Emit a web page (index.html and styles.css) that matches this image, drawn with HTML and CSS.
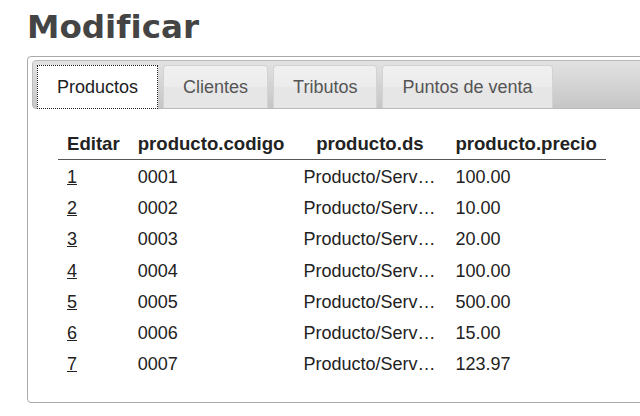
FILE: index.html
```html
<!DOCTYPE html>
<html lang="es">
<head>
<meta charset="utf-8">
<title>Modificar</title>
<link rel="stylesheet" href="styles.css">
</head>
<body>
<div class="page">
  <h1 class="title">Modificar</h1>
  <div class="widget">
    <ul class="nav">
      <li class="tab active"><a href="#productos">Productos</a></li>
      <li class="tab"><a href="#clientes">Clientes</a></li>
      <li class="tab"><a href="#tributos">Tributos</a></li>
      <li class="tab"><a href="#puntos">Puntos de venta</a></li>
    </ul>
    <div class="panel" id="productos">
      <table class="grid">
        <thead>
          <tr><th>Editar</th><th>producto.codigo</th><th>producto.ds</th><th>producto.precio</th></tr>
        </thead>
        <tbody>
          <tr><td><a href="#">1</a></td><td>0001</td><td class="ds">Producto/Serv…</td><td>100.00</td></tr>
          <tr><td><a href="#">2</a></td><td>0002</td><td class="ds">Producto/Serv…</td><td>10.00</td></tr>
          <tr><td><a href="#">3</a></td><td>0003</td><td class="ds">Producto/Serv…</td><td>20.00</td></tr>
          <tr><td><a href="#">4</a></td><td>0004</td><td class="ds">Producto/Serv…</td><td>100.00</td></tr>
          <tr><td><a href="#">5</a></td><td>0005</td><td class="ds">Producto/Serv…</td><td>500.00</td></tr>
          <tr><td><a href="#">6</a></td><td>0006</td><td class="ds">Producto/Serv…</td><td>15.00</td></tr>
          <tr><td><a href="#">7</a></td><td>0007</td><td class="ds">Producto/Serv…</td><td>123.97</td></tr>
        </tbody>
      </table>
    </div>
  </div>
</div>
</body>
</html>
```

FILE: styles.css
```css
html, body {
  margin: 0;
  padding: 0;
  overflow: hidden;
  background: #fff;
}
body {
  font-family: "Liberation Sans", Arial, sans-serif;
  color: #222;
}
.page {
  padding: 9px 0 0 27px;
  width: 680px;
}
.title {
  margin: 0 0 10px 0;
  font-family: "DejaVu Sans", sans-serif;
  font-weight: bold;
  font-size: 32.6px;
  line-height: 37px;
  color: #444;
}
.widget {
  border: 1px solid #aaa;
  border-radius: 4px;
  padding: 3px 4px 4px;
  background: #fff;
}
.nav {
  list-style: none;
  margin: 0;
  padding: 4px 4px 0 4px;
  display: flex;
  align-items: flex-end;
  gap: 5px;
  border: 1px solid #bbb;
  border-radius: 4px;
  background: linear-gradient(#e2e2e2, #c6c6c6);
}
.tab {
  border: 1px solid #d3d3d3;
  border-bottom: 0;
  border-radius: 4px 4px 0 0;
  background: linear-gradient(#f0f0f0 0, #ececec 50%, #e6e6e6 50%, #e6e6e6 100%);
}
.tab a {
  display: block;
  padding: 11px 19px 10px;
  font-size: 18px;
  line-height: 21px;
  color: #555;
  text-decoration: none;
}
.tab.active {
  background: #fff;
  border: 1px dotted #222;
  border-radius: 0;
  margin-bottom: -1px;
}
.tab.active a {
  color: #212121;
}
.panel {
  padding: 19px 26px 20px;
}
.grid {
  border-collapse: collapse;
  font-size: 18px;
}
.grid th {
  font-weight: bold;
  font-size: 18.6px;
  line-height: 21px;
  padding: 5px 9px;
  text-align: center;
  border-bottom: 1px solid #555;
  color: #222;
  white-space: nowrap;
}
.grid td {
  padding: 7px 9px 3.2px;
  line-height: 21px;
  text-align: left;
  color: #222;
  white-space: nowrap;
}
.grid td.ds {
  min-width: 134px;
  padding-left: 10px;
}
.grid td a {
  color: #222;
  text-decoration: underline;
}
```
